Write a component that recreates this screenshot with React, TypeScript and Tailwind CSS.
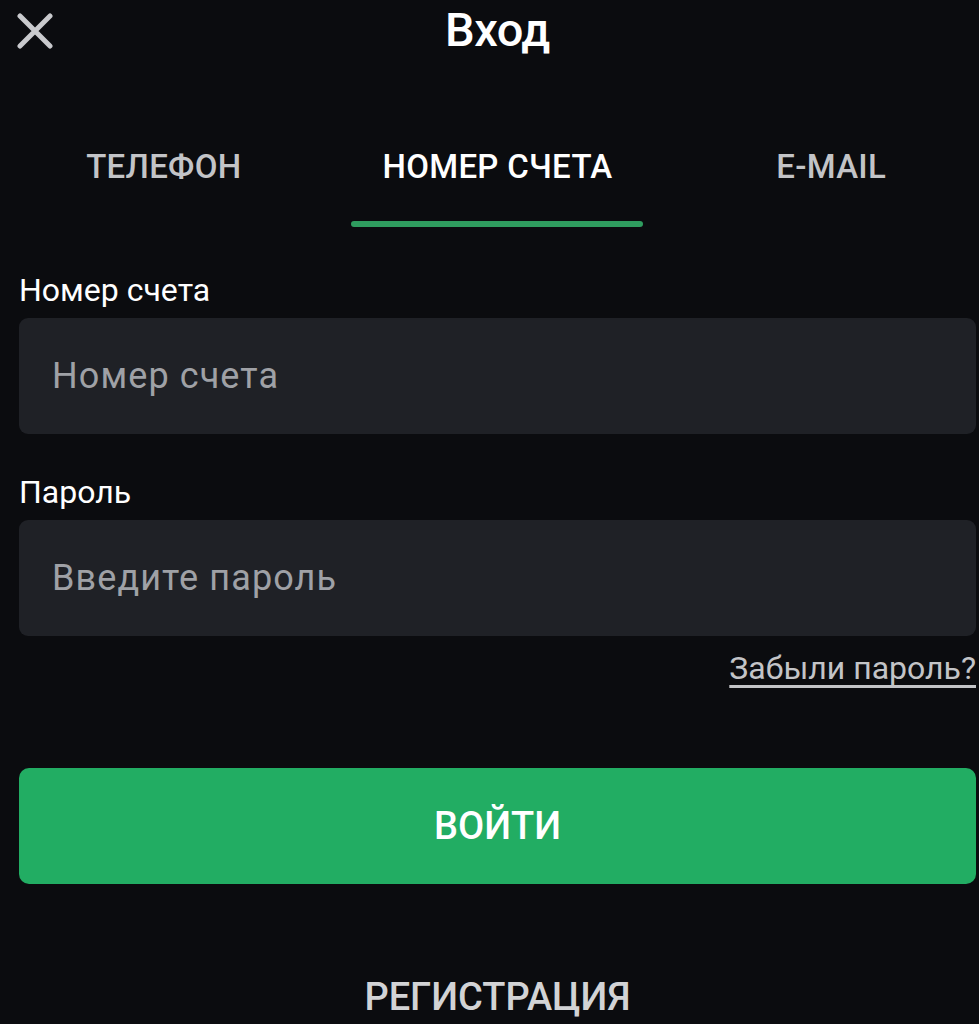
const tabs = ['ТЕЛЕФОН', 'НОМЕР СЧЕТА', 'E-MAIL'];

function Field({ label, placeholder }: { label: string; placeholder: string }) {
  return (
    <div>
      <label className="block text-[32px] leading-[36px] text-white">{label}</label>
      <div className="mt-[10px] flex h-[116px] items-center rounded-[9px] bg-[#1f2126] px-[33px]">
        <span className="text-[36px] tracking-[1.1px] text-[#9fa1a6]">{placeholder}</span>
      </div>
    </div>
  );
}

export default function App() {
  return (
    <div
      className="h-[1024px] w-[979px] overflow-hidden bg-[#0b0c0f] text-white"
      style={{ fontFamily: 'Roboto, "Noto Sans", sans-serif' }}
    >
      <div className="pl-[19px] pr-[3px]">
        <header className="relative flex h-[62px] items-center justify-center">
          <button className="absolute left-[-2px] top-[13px] text-[#c9cacd]" aria-label="close">
            <svg width="36" height="36" viewBox="0 0 36 36" fill="none">
              <path d="M3 3L33 33M33 3L3 33" stroke="currentColor" strokeWidth="5" strokeLinecap="round" />
            </svg>
          </button>
          <h1 className="-mt-[4px] text-[47px] font-medium leading-none tracking-[-0.5px]">Вход</h1>
        </header>

        <nav className="-ml-[22px] -mr-[22px] mt-[75px] grid grid-cols-3">
          {tabs.map((t, i) => (
            <div key={t} className="flex flex-col items-center">
              <span
                className={
                  i === 1
                    ? 'text-[33px] font-medium leading-[60px] tracking-[0.3px] text-white'
                    : 'text-[33px] font-medium leading-[60px] tracking-[0.3px] text-[#c3c4c7]'
                }
              >
                {t}
              </span>
              <div className={i === 1 ? 'mt-[24px] h-[6px] w-[292px] rounded-full bg-[#2f9d5f]' : 'mt-[24px] h-[6px]'} />
            </div>
          ))}
        </nav>

        <form className="mt-[45px]">
          <Field label="Номер счета" placeholder="Номер счета" />
          <div className="mt-[40px]">
            <Field label="Пароль" placeholder="Введите пароль" />
          </div>
          <div className="mt-[12px] flex justify-end">
            <a className="text-[32px] leading-[40px] text-[#c3c4c7] underline underline-offset-[6px]">
              Забыли пароль?
            </a>
          </div>
          <button
            type="button"
            className="mt-[80px] flex h-[116px] w-full items-center justify-center rounded-[10px] bg-[#22ad63] text-[38px] font-medium text-white"
          >
            ВОЙТИ
          </button>
        </form>

        <div className="mt-[94px] flex justify-center">
          <span className="text-[38px] font-medium leading-none text-[#d2d3d5]">РЕГИСТРАЦИЯ</span>
        </div>
      </div>
    </div>
  );
}
